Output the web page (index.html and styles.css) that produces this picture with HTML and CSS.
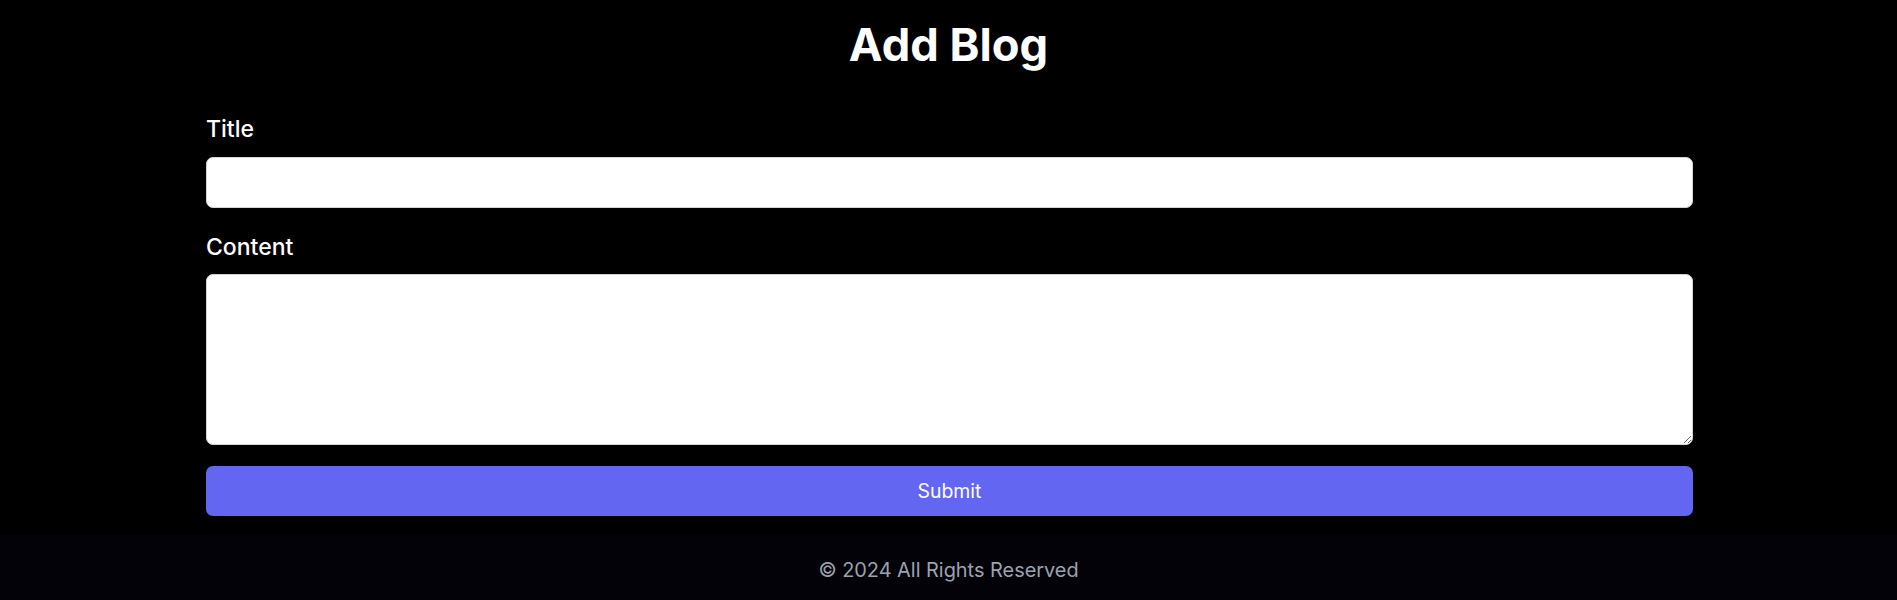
FILE: index.html
```html
<!DOCTYPE html>
<html lang="en">
<head>
<meta charset="utf-8">
<title>Add Blog</title>
<link rel="stylesheet" href="styles.css">
</head>
<body>
<main class="page">
  <h1 class="heading">Add Blog</h1>
  <form class="form">
    <label class="label" for="title">Title</label>
    <input class="field input" id="title" type="text">
    <label class="label label-gap" for="content">Content</label>
    <textarea class="field textarea" id="content"></textarea>
    <button class="submit" type="button">Submit</button>
  </form>
</main>
<footer class="footer">© 2024 All Rights Reserved</footer>
</body>
</html>
```
FILE: styles.css
```css
* { box-sizing: border-box; }
html, body { margin: 0; padding: 0; }
body {
  background: #000;
  color: #fff;
  font-family: Inter, "Noto Sans", sans-serif;
  height: 600px;
  overflow: hidden;
}
.page {
  height: 535px;
  padding-top: 21px;
}
.heading {
  margin: 0;
  text-align: center;
  font-size: 45.3px;
  line-height: 48.4px;
  font-weight: 700;
}
.form {
  display: flex;
  flex-direction: column;
  width: 1487px;
  margin: 43px 0 0 206px;
}
.label {
  font-size: 23px;
  line-height: 34px;
  font-weight: 500;
  margin-bottom: 10.8px;
}
.label-gap { margin-top: 21.3px; }
.field {
  display: block;
  width: 100%;
  background: #fff;
  border: 1px solid #d1d5db;
  border-radius: 7px;
  font-family: inherit;
  font-size: 19.4px;
  color: #000;
  padding: 8px 12px;
  outline: none;
}
.input { height: 51px; }
.textarea { height: 171px; resize: vertical; }
.submit {
  margin-top: 21px;
  height: 50px;
  width: 100%;
  border: 0;
  border-radius: 7px;
  background: #6366f1;
  color: #fff;
  font-family: inherit;
  font-size: 19.4px;
  font-weight: 400;
}
.footer {
  height: 65px;
  background: #020208;
  color: #9ca3af;
  text-align: center;
  font-size: 19.9px;
  line-height: 29px;
  padding-top: 21.4px;
}
```
